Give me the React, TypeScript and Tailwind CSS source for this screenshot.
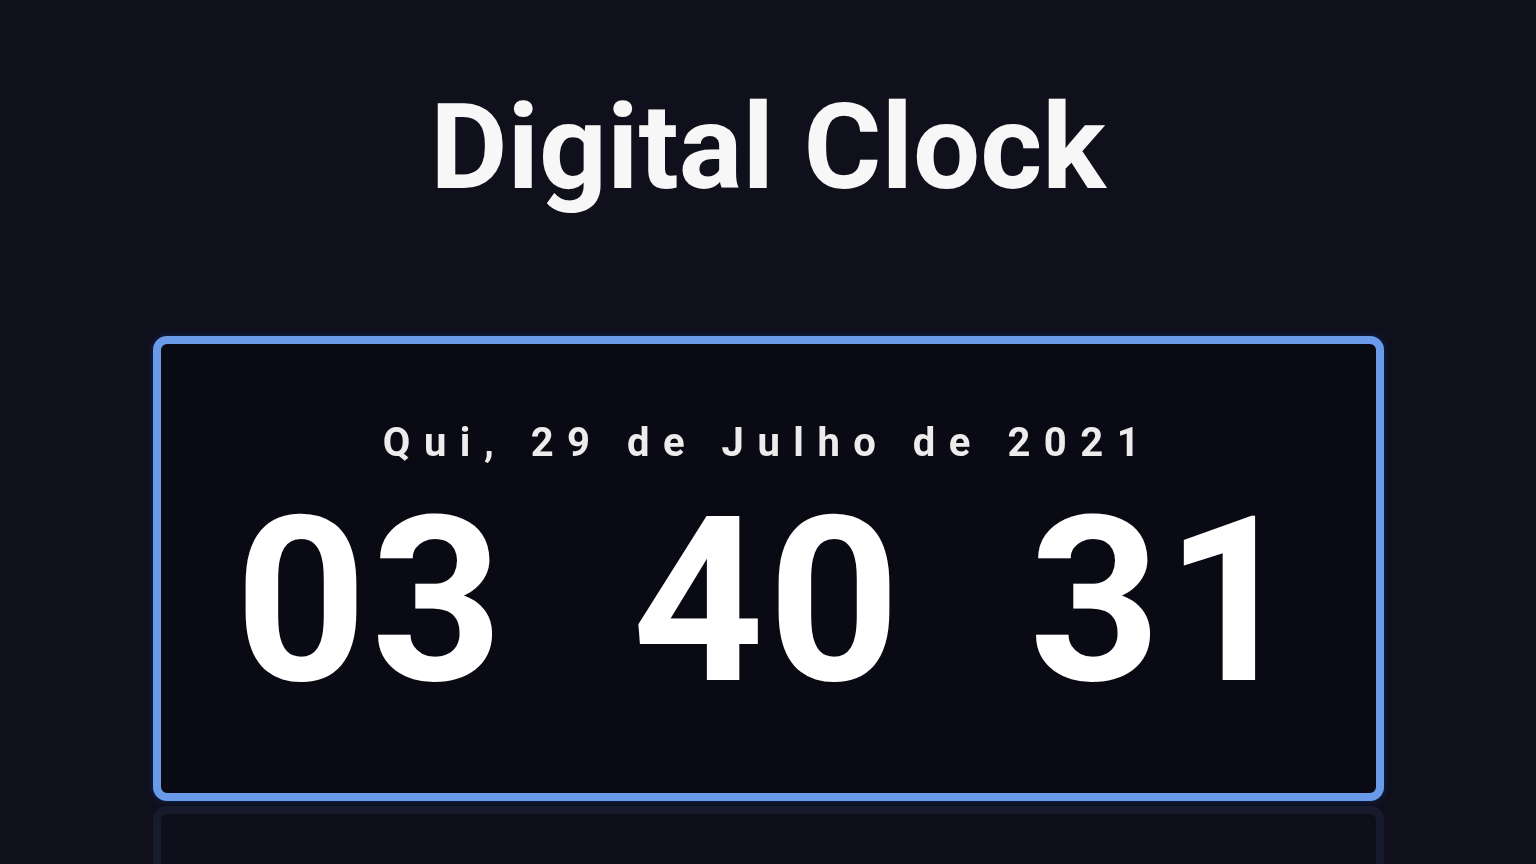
export default function App() {
  const date = 'Qui, 29 de Julho de 2021'
  const parts = ['03', '40', '31']

  return (
    <div className="min-h-screen w-full bg-[#10101d] pt-[88px] font-['Roboto',sans-serif] text-white">
      {/* Title */}
      <h1 className="text-center text-[119px] font-bold leading-none text-[#f7f7f7]">Digital Clock</h1>

      {/* Clock box */}
      <div className="mx-auto mt-[129px] w-[1231px] rounded-[14px] border-[8px] border-[#6a9be8] bg-[#0a0a14] pt-[79px] pb-[76px] shadow-[0_0_6px_#0d2a5c] [-webkit-box-reflect:below_5px_linear-gradient(rgba(0,0,0,0.14),rgba(0,0,0,0.08))]">
        <p className="text-center text-[40px] font-bold leading-none tracking-[13.5px] text-[#ececec]">{date}</p>
        <div className="mt-[24px] flex justify-center gap-[125px]">
          {parts.map((p) => (
            <span key={p} className="text-[230px] font-bold leading-none tracking-[4px] text-white">
              {p}
            </span>
          ))}
        </div>
      </div>
    </div>
  )
}
